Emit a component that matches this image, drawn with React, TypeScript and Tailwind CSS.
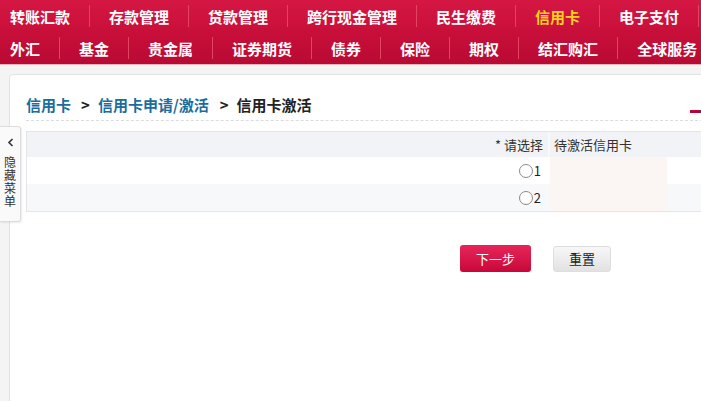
import React from "react";

// Credit card activation page — top red nav, breadcrumb, selection table, actions.

const ROW1 = ["转账汇款", "存款管理", "贷款管理", "跨行现金管理", "民生缴费", "信用卡", "电子支付"];
const ROW2 = ["外汇", "基金", "贵金属", "证券期货", "债券", "保险", "期权", "结汇购汇", "全球服务"];

const FONT = { fontFamily: '"Noto Sans CJK SC", "Noto Sans", sans-serif' };

function NavRow({ items, active }: { items: string[]; active?: string }) {
  return (
    <div className="flex h-[32px] items-center pl-[10px] whitespace-nowrap">
      {items.map((label, i) => (
        <React.Fragment key={label}>
          <span
            className={
              "text-[15px] font-bold leading-none " +
              (i === 0 ? "pr-[19px] " : "px-[19px] ") +
              (label === active ? "text-[#ffcf1f]" : "text-white")
            }
          >
            {label}
          </span>
          <span className="h-[22px] w-px shrink-0 bg-[#e2435f]" />
        </React.Fragment>
      ))}
    </div>
  );
}

function Radio({ label }: { label: string }) {
  return (
    <span className="inline-flex items-center">
      <span className="h-[14px] w-[14px] rounded-full border border-[#8a8a8a] bg-white" />
      <span className="ml-px text-[13px] text-[#222]">{label}</span>
    </span>
  );
}

function BodyRow({ label, striped }: { label: string; striped?: boolean }) {
  const bg = striped ? "bg-[#f7f8fa]" : "bg-white";
  return (
    <div className={"flex h-[27px] " + bg}>
      <div className="flex w-[521px] items-center justify-end pr-[7px]">
        <Radio label={label} />
      </div>
      <div className="w-[121px] px-[2px]">
        <div className="h-full bg-[#fbf6f4]" />
      </div>
      <div className="flex-1" />
    </div>
  );
}

export default function App() {
  return (
    <div className="relative h-[401px] w-[701px] overflow-hidden bg-[#f4f4f4]" style={FONT}>
      <header className="border-b border-[#e9b3c0] bg-gradient-to-b from-[#d51743] via-[#c80f3a] to-[#b90a33]">
        <NavRow items={ROW1} active="信用卡" />
        <NavRow items={ROW2} />
      </header>

      <div className="ml-[9px] mt-[9px] h-[400px] w-[740px] rounded-tl-[4px] border border-[#e3e3e3] bg-white pl-[16px] pt-[19px]">
        <div className="flex items-center">
          <div className="flex h-[22px] items-center text-[15px] font-bold">
            <span className="text-[#1b6d9d]">信用卡</span>
            <span className="ml-[10px] mr-[8px] text-[#222]">&gt;</span>
            <span className="text-[#1b6d9d]">信用卡申请/激活</span>
            <span className="ml-[11px] mr-[8px] text-[#222]">&gt;</span>
            <span className="text-[#222]">信用卡激活</span>
          </div>
          <div className="ml-[378px] mt-[12px] h-[3px] w-[30px] bg-[#b4053a]" />
        </div>
        <div className="mt-[4px] border-t border-dashed border-[#dcdcdc]" />

        <div className="mt-[10px] border-y border-l border-[#e2e5ea]">
          <div className="flex h-[25px] bg-[#f1f3f6] text-[13px] text-[#333]">
            <div className="flex w-[521px] items-center justify-end pr-[5px]">* 请选择</div>
            <div className="w-[2px] bg-[#f8f9fb]" />
            <div className="flex items-center pl-[4px]">待激活信用卡</div>
          </div>
          <BodyRow label="1" />
          <BodyRow label="2" striped />
        </div>

        <div className="mt-[33px] flex pl-[434px]">
          <button className="h-[27px] w-[71px] rounded-[3px] bg-gradient-to-b from-[#e6245a] to-[#c90539] text-[13px] text-white">
            下一步
          </button>
          <button className="ml-[22px] mt-px h-[26px] w-[58px] rounded-[3px] border border-[#dedede] bg-gradient-to-b from-[#f7f7f7] to-[#e2e2e2] text-[13px] text-[#222]">
            重置
          </button>
        </div>
      </div>

      {/* collapsible side menu tab, overlays the panel edge */}
      <div className="absolute left-0 top-[126px] flex h-[96px] w-[21px] flex-col items-center rounded-r-[3px] border border-l-0 border-[#dcdcdc] bg-[#fafafa] shadow-[1px_1px_2px_rgba(0,0,0,0.08)]">
        <svg className="mt-[11px]" width="7" height="9" viewBox="0 0 7 9">
          <path d="M5.5 1 L2 4.5 L5.5 8" fill="none" stroke="#333" strokeWidth="1.6" />
        </svg>
        <div className="mt-[8px] w-[12px] break-all text-[12px] leading-[13px] text-[#333]">
          隐藏菜单
        </div>
      </div>
    </div>
  );
}
